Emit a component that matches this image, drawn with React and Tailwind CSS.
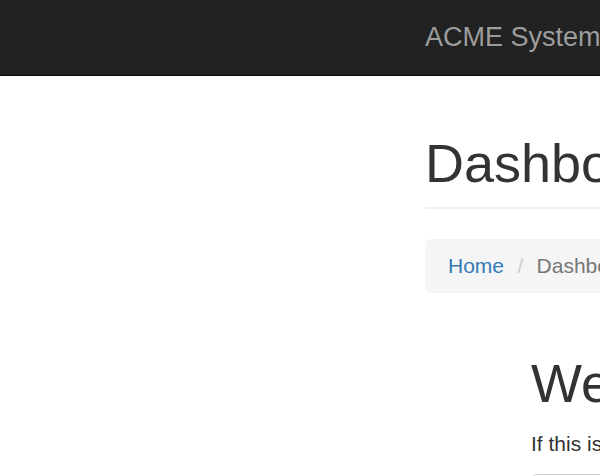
export default function App() {
  return (
    <div
      className="w-[600px] h-[476px] overflow-hidden bg-white text-[#333]"
      style={{ fontFamily: '"Liberation Sans", Arial, sans-serif' }}
    >
      <nav className="h-[76px] box-border bg-[#222] border-b border-[#080808] pl-[425px] whitespace-nowrap">
        <div className="pt-[22px] text-[27px] leading-[30px] text-[#9d9d9d]">ACME System</div>
      </nav>
      <main className="pl-[425px] w-[1600px] whitespace-nowrap">
        <div className="mt-[58px] pb-[14px] border-b-2 border-[#eee]">
          <h1 className="text-[54px] leading-[59px] font-normal">Dashboard</h1>
        </div>
        <div className="mt-[30px] h-[54px] box-border bg-[#f5f5f5] rounded-[6px] px-[23px] py-[12px] text-[21px] leading-[30px]">
          <a className="text-[#337ab7]">Home</a>{" "}
          <span className="px-[7.5px] text-[#ccc]">/{"\u00a0"}</span>
          <span className="text-[#777]">Dashboard</span>
        </div>
        <section className="ml-[106px] mt-[61px]">
          <h1 className="text-[54px] leading-[59px] font-normal">Welcome to ACME System</h1>
          <p className="mt-[16px] text-[21px] leading-[30px]">
            If this is your first time here, please take a moment to review your account settings.
          </p>
          <button className="mt-[15px] h-[51px] px-[18px] rounded-[6px] border border-[#ccc] bg-white text-[21px] text-[#333]">
            Get started
          </button>
        </section>
      </main>
    </div>
  );
}
